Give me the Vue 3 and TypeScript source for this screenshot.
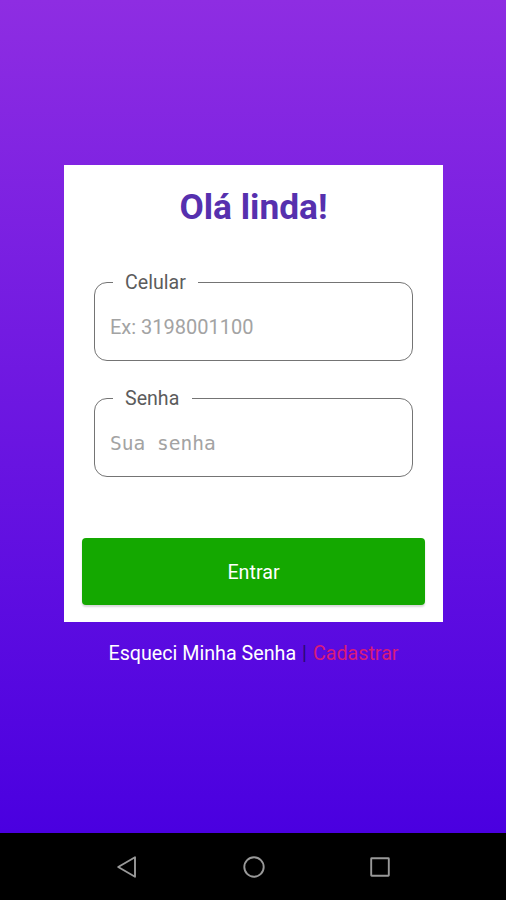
<script setup lang="ts">
import { ref } from 'vue'

interface Field {
  label: string
  placeholder: string
  type: string
  mono: boolean
}

const fields: Field[] = [
  { label: 'Celular', placeholder: 'Ex: 3198001100', type: 'tel', mono: false },
  { label: 'Senha', placeholder: 'Sua senha', type: 'password', mono: true },
]
const values = ref<string[]>(['', ''])
</script>

<template>
  <div class="screen">
    <main class="content">
      <form class="card" @submit.prevent>
        <h1>Olá linda!</h1>
        <fieldset v-for="(field, i) in fields" :key="field.label" class="field">
          <legend><span>{{ field.label }}</span></legend>
          <input
            v-model="values[i]"
            :class="{ mono: field.mono }"
            :type="field.type"
            :placeholder="field.placeholder"
            :aria-label="field.label"
          />
        </fieldset>
        <button class="submit" type="submit">Entrar</button>
      </form>
      <p class="links">
        <a class="forgot">Esqueci Minha Senha</a>
        <span class="sep">|</span>
        <a class="register">Cadastrar</a>
      </p>
    </main>
    <nav class="navbar">
      <svg viewBox="0 0 24 24"><path d="M20 2.3V21.7L3.2 12Z" /></svg>
      <svg viewBox="0 0 24 24"><circle cx="12" cy="12" r="9.7" /></svg>
      <svg viewBox="0 0 24 24"><rect x="3.2" y="3.2" width="17.6" height="17.6" rx="0.5" /></svg>
    </nav>
  </div>
</template>

<style>
body {
  margin: 0;
}
</style>

<style scoped>
.screen {
  display: flex;
  flex-direction: column;
  width: 506px;
  height: 900px;
  overflow: hidden;
  font-family: Roboto, sans-serif;
}
.content {
  flex: 1;
  display: flex;
  flex-direction: column;
  align-items: center;
  padding-top: 165px;
  background: linear-gradient(#8e2de2, #4a00e0);
}
.card {
  box-sizing: border-box;
  width: 379px;
  height: 457px;
  padding: 20px 18px 17px;
  display: flex;
  flex-direction: column;
  background: #fff;
}
h1 {
  margin: 0 0 41px;
  padding-left: 1px;
  font-size: 35.3px;
  line-height: 44px;
  font-weight: 700;
  text-align: center;
  color: #5630ae;
}
.field {
  box-sizing: border-box;
  height: 91px;
  min-width: 0;
  margin: 0 11.5px 25px 12px;
  padding: 0 15.5px;
  border: 1px solid #747474;
  border-radius: 13px;
}
legend {
  margin-left: 2.5px;
  padding: 2px 12.5px 0;
  font-size: 19.6px;
  line-height: 22px;
  color: #5c5c5c;
}
input {
  display: block;
  width: 100%;
  height: 66px;
  padding: 0;
  border: 0;
  outline: 0;
  background: none;
  font: 20px Roboto, sans-serif;
}
input.mono {
  font-family: "DejaVu Sans Mono", monospace;
  font-size: 19.5px;
}
input::placeholder {
  color: #a3a3a3;
  opacity: 1;
}
.submit {
  height: 67px;
  margin-top: auto;
  padding: 2px 0 0 1px;
  border: 0;
  border-radius: 4px;
  background: #14a800;
  box-shadow: 0 2px 2px rgba(0, 0, 0, 0.16);
  font: 19.7px Roboto, sans-serif;
  color: #fff;
}
.links {
  display: flex;
  gap: 6px;
  margin: 20px 0 0;
  padding-left: 1px;
  font-size: 19.7px;
  line-height: 24px;
  color: #fff;
}
.sep {
  color: #2a0a70;
}
.register {
  color: #d81b7a;
}
.navbar {
  display: flex;
  justify-content: center;
  align-items: center;
  gap: 102.5px;
  height: 67px;
  padding-left: 1px;
  background: #000;
}
.navbar svg {
  width: 24px;
  height: 24px;
  fill: none;
  stroke: #999;
  stroke-width: 1.9;
  stroke-linejoin: round;
}
</style>
